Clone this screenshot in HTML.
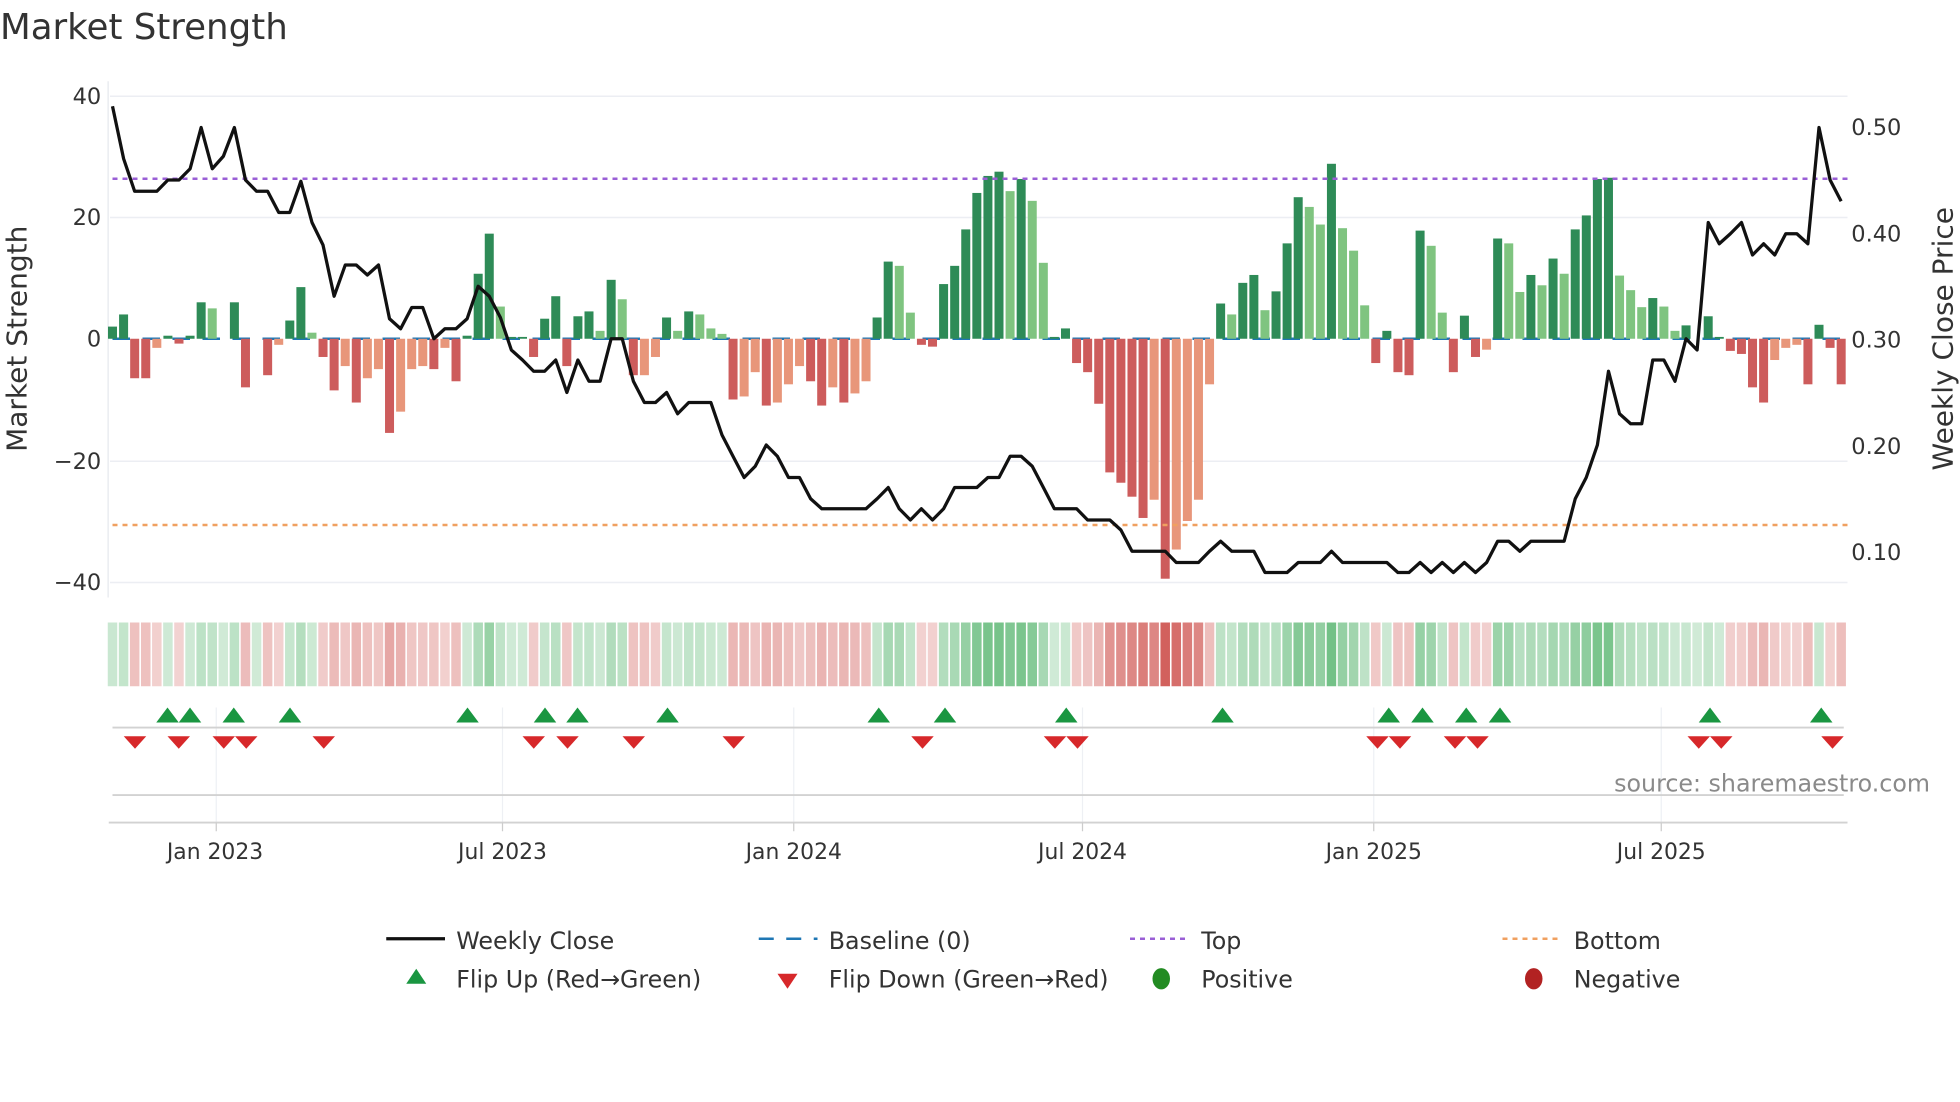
<!DOCTYPE html>
<html><head><meta charset="utf-8"><style>
html,body{margin:0;padding:0;background:#fff;}
svg{display:block;font-family:"DejaVu Sans","Liberation Sans",sans-serif;}
</style></head><body>
<svg id="s" xmlns="http://www.w3.org/2000/svg" width="1960" height="1102" viewBox="0 0 1568 881.6">
<rect width="1568" height="881.6" fill="#fff"/>
<text x="0" y="31" font-size="28.5" fill="#333">Market Strength</text>
<g id="grid" stroke="#eceef3" stroke-width="1.2">
<line x1="88" y1="77" x2="1478" y2="77"/><line x1="88" y1="174" x2="1478" y2="174"/>
<line x1="88" y1="369" x2="1478" y2="369"/><line x1="88" y1="466" x2="1478" y2="466"/>
</g>
<line x1="86.5" y1="65" x2="86.5" y2="478" stroke="#e6e8ee" stroke-width="1"/>
<g font-size="18" fill="#333" text-anchor="end">
<text x="81" y="83">40</text><text x="81" y="180">20</text><text x="81" y="277">0</text>
<text x="81" y="375">−20</text><text x="81" y="472">−40</text>
</g>
<g font-size="18" fill="#333">
<text x="1481" y="108">0.50</text><text x="1481" y="193">0.40</text><text x="1481" y="278">0.30</text>
<text x="1481" y="363">0.20</text><text x="1481" y="448">0.10</text>
</g>
<text transform="translate(21,271) rotate(-90)" font-size="22.4" fill="#333" text-anchor="middle">Market Strength</text>
<text transform="translate(1562,271) rotate(-90)" font-size="22.4" fill="#333" text-anchor="middle">Weekly Close Price</text>
<line x1="90" y1="271" x2="1478" y2="271" stroke="#1f77b4" stroke-width="2" stroke-dasharray="14,10"/>
<g id="bars"></g>
<line x1="90" y1="143" x2="1478" y2="143" stroke="#9a5fd6" stroke-width="2" stroke-dasharray="4,4"/>
<line x1="90" y1="420" x2="1478" y2="420" stroke="#f0a060" stroke-width="2" stroke-dasharray="4,4"/>
<polyline id="price" fill="none" stroke="#111" stroke-width="2.6" stroke-linejoin="round"/>
<g id="heat"></g>
<g stroke="#eef0f4" stroke-width="1">
<line x1="173" y1="566" x2="173" y2="658"/><line x1="402" y1="566" x2="402" y2="658"/><line x1="635" y1="566" x2="635" y2="658"/>
<line x1="866" y1="566" x2="866" y2="658"/><line x1="1099" y1="566" x2="1099" y2="658"/><line x1="1329" y1="566" x2="1329" y2="658"/>
</g>
<line x1="90" y1="582" x2="1475" y2="582" stroke="#d2d2d2" stroke-width="1.5"/>
<line x1="90" y1="636" x2="1475" y2="636" stroke="#d2d2d2" stroke-width="1.5"/>
<line x1="87" y1="658" x2="1478" y2="658" stroke="#d2d2d2" stroke-width="1.5"/>
<g stroke="#ccc" stroke-width="1">
<line x1="173" y1="658" x2="173" y2="665"/><line x1="402" y1="658" x2="402" y2="665"/><line x1="635" y1="658" x2="635" y2="665"/>
<line x1="866" y1="658" x2="866" y2="665"/><line x1="1099" y1="658" x2="1099" y2="665"/><line x1="1329" y1="658" x2="1329" y2="665"/>
</g>
<g id="mk"></g>
<text x="1544" y="633" font-size="19" fill="#8a8a8a" text-anchor="end">source: sharemaestro.com</text>
<g font-size="17.5" fill="#333" text-anchor="middle">
<text x="172" y="687">Jan 2023</text><text x="402" y="687">Jul 2023</text><text x="635" y="687">Jan 2024</text>
<text x="866" y="687">Jul 2024</text><text x="1099" y="687">Jan 2025</text><text x="1329" y="687">Jul 2025</text>
</g>
<g font-size="19" fill="#333">
<line x1="309" y1="751" x2="356" y2="751" stroke="#111" stroke-width="2.6"/>
<text x="365" y="759">Weekly Close</text>
<line x1="607" y1="751" x2="654" y2="751" stroke="#1f77b4" stroke-width="2" stroke-dasharray="12,10"/>
<text x="663" y="759">Baseline (0)</text>
<line x1="904" y1="751" x2="951" y2="751" stroke="#9a5fd6" stroke-width="2" stroke-dasharray="4,4"/>
<text x="961" y="759">Top</text>
<line x1="1202" y1="751" x2="1249" y2="751" stroke="#f0a060" stroke-width="2" stroke-dasharray="4,4"/>
<text x="1259" y="759">Bottom</text>
<polygon points="333,775 325,787 341,787" fill="#1a9641"/>
<text x="365" y="790">Flip Up (Red→Green)</text>
<polygon points="622,779 638,779 630,791" fill="#d7282a"/>
<text x="663" y="790">Flip Down (Green→Red)</text>
<ellipse cx="929" cy="783" rx="7" ry="8.5" fill="#228b22"/>
<text x="961" y="790">Positive</text>
<ellipse cx="1227" cy="783" rx="7" ry="8.5" fill="#b22222"/>
<text x="1259" y="790">Negative</text>
</g>
<script>
var V=[[2,0],[4,0],[-6.5,0],[-6.5,0],[-1.5,1],[.5,0],[-.8,0],[.5,0],[6,0],[5,1],[0,0],[6,0],[-8,0],[0,0],[-6,0],[-1,1],[3,0],[8.5,0],[1,1],[-3,0],[-8.5,0],[-4.5,1],[-10.5,0],[-6.5,1],[-5,1],[-15.5,0],[-12,1],[-5,1],[-4.5,1],[-5,0],[-1.5,1],[-7,0],[.5,0],[10.7,0],[17.3,0],[5.3,1],[.3,0],[.3,0],[-3,0],[3.3,0],[7,0],[-4.5,0],[3.7,0],[4.5,0],[1.3,1],[9.7,0],[6.5,1],[-6,0],[-6,1],[-3,1],[3.5,0],[1.3,1],[4.5,0],[4,1],[1.7,1],[.8,1],[-10,0],[-9.5,1],[-5.5,1],[-11,0],[-10.5,1],[-7.5,1],[-4.5,1],[-7,0],[-11,0],[-8,1],[-10.5,0],[-9,1],[-7,1],[3.5,0],[12.7,0],[12,1],[4.3,1],[-1,0],[-1.3,0],[9,0],[12,0],[18,0],[24,0],[26.8,0],[27.5,0],[24.3,1],[26.3,0],[22.7,1],[12.5,1],[.3,0],[1.7,0],[-4,0],[-5.5,0],[-10.7,0],[-22,0],[-23.7,0],[-26,0],[-29.5,0],[-26.5,1],[-39.5,0],[-34.7,1],[-30,1],[-26.5,1],[-7.5,1],[5.8,0],[4,1],[9.2,0],[10.5,0],[4.7,1],[7.8,0],[15.7,0],[23.3,0],[21.7,1],[18.8,1],[28.8,0],[18.2,1],[14.5,1],[5.5,1],[-4,0],[1.3,0],[-5.5,0],[-6,0],[17.8,0],[15.3,1],[4.3,1],[-5.5,0],[3.8,0],[-3,0],[-1.8,1],[16.5,0],[15.7,1],[7.7,1],[10.5,0],[8.8,1],[13.2,0],[10.7,1],[18,0],[20.3,0],[26.3,0],[26.5,0],[10.4,1],[8,1],[5.2,1],[6.7,0],[5.3,1],[1.3,1],[2.2,0],[0,0],[3.7,0],[.3,0],[-2,0],[-2.5,0],[-8,0],[-10.5,0],[-3.5,1],[-1.5,1],[-1,1],[-7.5,0],[2.3,0],[-1.5,0],[-7.5,0]];
var NS="http://www.w3.org/2000/svg",bars=document.getElementById('bars'),heat=document.getElementById('heat');
function el(t,a,p){var e=document.createElementNS(NS,t);for(var k in a)e.setAttribute(k,a[k]);p.appendChild(e);return e;}
var st=8.865,x0=90;
V.forEach(function(d,i){var v=d[0],x=x0+i*st,y0=271,hh=Math.abs(v)*4.86;
 var c=v>=0?(d[1]?'#7fc480':'#2e8b57'):(d[1]?'#e8967a':'#cd5c5c');
 if(hh>0.3)el('rect',{x:x-3.6,y:v>=0?y0-hh:y0,width:7.2,height:hh,fill:c},bars);
 var a=0.22+0.6*Math.min(1,Math.abs(v)/40);
 var hc=v>=0?'rgba(40,160,70,'+a+')':'rgba(200,60,55,'+a+')';
 el('rect',{x:x-3.8,y:498,width:7.6,height:51,fill:hc},heat);
});
var P=[85,127,153,153,153,144,144,135,102,135,125,102,144,153,153,170,170,145,178,196,237,212,212,220,212,255,263,246,246,271,263,263,255,229,237,254,280,288,297,297,288,314,288,305,305,271,271,305,322,322,314,331,322,322,322,348,365,382,373,356,365,382,382,399,407,407,407,407,407,399,390,407,416,407,416,407,390,390,390,382,382,365,365,373,390,407,407,407,416,416,416,424,441,441,441,441,450,450,450,441,433,441,441,441,458,458,458,450,450,450,441,450,450,450,450,450,458,458,450,458,450,458,450,458,450,433,433,441,433,433,433,433,399,382,356,297,331,339,339,288,288,305,271,280,178,195,187,178,204,195,204,187,187,195,102,144,161];
document.getElementById('price').setAttribute('points',P.map(function(y,i){return (x0+i*st).toFixed(1)+','+y}).join(' '));
var mk=document.getElementById('mk');
[134,152,187,232,374,436,462,534,703,756,853,978,1111,1138,1173,1200,1368,1457].forEach(function(x){el('polygon',{points:(x)+',566 '+(x-9)+',578 '+(x+9)+',578',fill:'#1a9641'},mk);});
[108,143,179,197,259,427,454,507,587,738,844,862,1102,1120,1164,1182,1359,1377,1466].forEach(function(x){el('polygon',{points:(x-9)+',589 '+(x+9)+',589 '+x+',599',fill:'#d7282a'},mk);});
</script>
</svg>
</body></html>
